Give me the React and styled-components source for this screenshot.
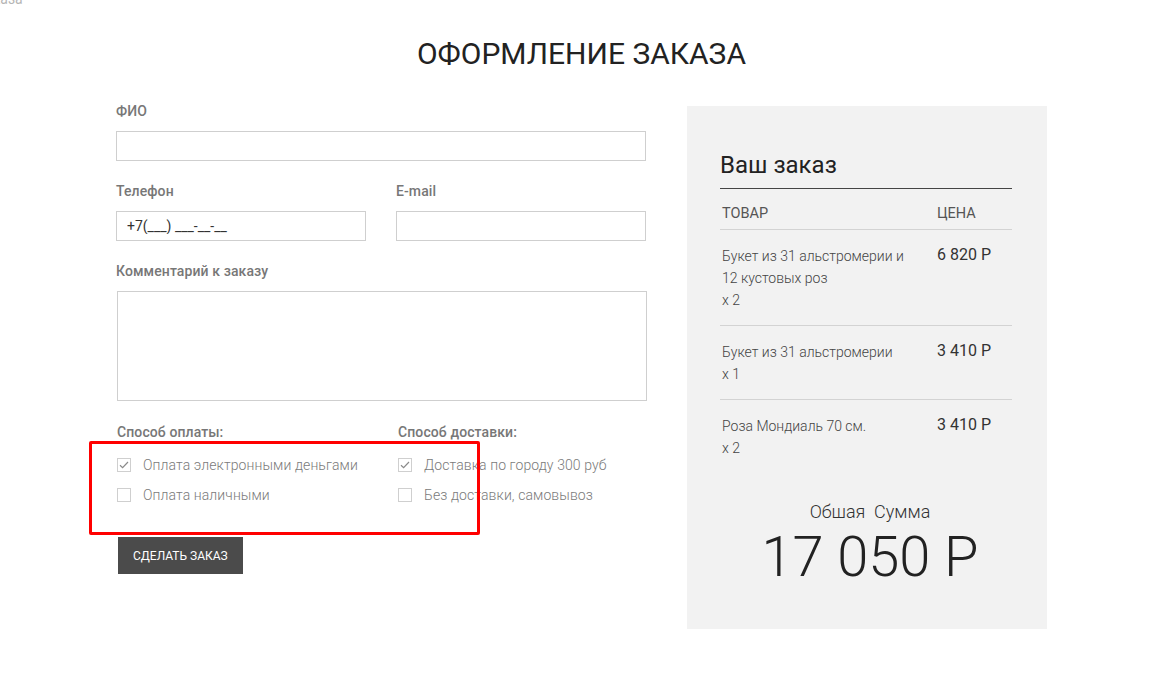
import React from 'react'
import styled, { createGlobalStyle } from 'styled-components'

const GlobalStyle = createGlobalStyle`
  html, body {
    margin: 0;
    padding: 0;
    background: #fff;
  }
  body {
    font-family: Roboto, "Liberation Sans", Arial, sans-serif;
    color: #333;
  }
  * { box-sizing: border-box; }
`

const Page = styled.div`
  position: relative;
  width: 1176px;
  min-height: 687px;
  padding: 0 0 58px 116px;
`

const Crumb = styled.div`
  height: 6px;
  overflow: hidden;
  margin-left: -116px;
  span {
    display: block;
    margin-top: -9px;
    margin-left: -22px;
    font-size: 14px;
    line-height: 16px;
    color: #b5b5b5;
  }
`

const Title = styled.h1`
  width: 931px;
  margin: 28px 0 0;
  text-align: center;
  font-size: 30px;
  line-height: 40px;
  font-weight: 400;
  color: #222;
`

const Layout = styled.div`
  display: grid;
  grid-template-columns: 530px 360px;
  column-gap: 41px;
  margin-top: 32px;
  align-items: start;
`

const Form = styled.form`
  display: flex;
  flex-direction: column;
  margin-top: -3px;
`

const Row = styled.div`
  display: grid;
  grid-template-columns: 250px 250px;
  column-gap: 30px;
`

const Field = styled.div`
  display: flex;
  flex-direction: column;
  margin-bottom: 22px;
`

const Label = styled.label`
  display: block;
  font-size: 14px;
  line-height: 16px;
  font-weight: 500;
  color: #777;
  margin-bottom: 12px;
  letter-spacing: 0.1px;
`

const Input = styled.input`
  width: 100%;
  height: 30px;
  border: 1px solid #cfcfcf;
  padding: 0 10px;
  font-family: Roboto, "Liberation Sans", Arial, sans-serif;
  font-size: 14px;
  color: #333;
  outline: none;
  background: #fff;
`

const TextArea = styled.textarea`
  width: 530px;
  height: 110px;
  margin-left: 1px;
  border: 1px solid #cfcfcf;
  resize: none;
  outline: none;
  font-family: Roboto, "Liberation Sans", Arial, sans-serif;
`

const Methods = styled.div`
  display: grid;
  grid-template-columns: 281px 250px;
  margin-left: 1px;
  margin-top: 1px;
`

const Options = styled.div`
  display: flex;
  flex-direction: column;
  margin-top: -2px;
`

const Option = styled.div`
  display: flex;
  align-items: center;
  height: 30px;
  gap: 12px;
  font-size: 14px;
  font-weight: 300;
  color: #7a7a7a;
  white-space: nowrap;
  letter-spacing: 0.1px;
`

const Box = styled.span`
  width: 14px;
  height: 14px;
  border: 1px solid #cfcfcf;
  display: flex;
  align-items: center;
  justify-content: center;
  background: #fff;
  flex: none;
`

const Button = styled.button`
  align-self: flex-start;
  margin: 27px 0 0 2px;
  height: 37px;
  padding: 0 15px;
  background: #4b4b4b;
  color: #fff;
  border: none;
  font-family: Roboto, "Liberation Sans", Arial, sans-serif;
  font-size: 12px;
  font-weight: 400;
  cursor: pointer;
`

const Panel = styled.aside`
  background: #f2f2f2;
  height: 523px;
  padding: 45px 35px 0 33px;
`

const PanelTitle = styled.h2`
  margin: 0;
  font-size: 24px;
  line-height: 28px;
  font-weight: 400;
  color: #222;
  padding-bottom: 9px;
  border-bottom: 1px solid #444;
`

const Table = styled.div`
  display: grid;
  grid-template-columns: 215px 1fr;
  margin-top: 17px;
`

const Head = styled.div`
  font-size: 14.5px;
  line-height: 16px;
  color: #555;
  padding: 0 0 7px 2px;
  border-bottom: 1px solid #d3d3d3;
`

const Cell = styled.div`
  padding: 15px 0 14px 2px;
  border-bottom: ${p => (p.$last ? 'none' : '1px solid #d3d3d3')};
  font-size: 14px;
  line-height: 22px;
  font-weight: 300;
  color: #444;
`

const Price = styled(Cell)`
  font-size: 16px;
  font-weight: 400;
  color: #333;
  line-height: 20px;
`

const Total = styled.div`
  display: flex;
  flex-direction: column;
  align-items: center;
  margin-top: 27px;
  padding-left: 8px;
`

const TotalLabel = styled.div`
  font-size: 18px;
  line-height: 24px;
  font-weight: 300;
  color: #333;
  white-space: pre;
`

const TotalSum = styled.div`
  font-size: 56px;
  line-height: 66px;
  font-weight: 300;
  color: #222;
  margin-top: 0;
`

const Highlight = styled.div`
  position: absolute;
  left: 89px;
  top: 441px;
  width: 391px;
  height: 94px;
  border: 3px solid #ff0000;
  border-radius: 2px;
  pointer-events: none;
`

const Check = () => (
  <svg width="10" height="8" viewBox="0 0 10 8" fill="none">
    <path d="M1 4.2 L3.6 6.6 L9 1" stroke="#8a8a8a" strokeWidth="1.2" />
  </svg>
)

const items = [
  { name: ['Букет из 31 альстромерии и', '12 кустовых роз'], qty: 2, price: '6 820 Р' },
  { name: ['Букет из 31 альстромерии'], qty: 1, price: '3 410 Р' },
  { name: ['Роза Мондиаль 70 см.'], qty: 2, price: '3 410 Р' },
]

export default function App() {
  return (
    <Page>
      <GlobalStyle />
      <Crumb><span>заказа</span></Crumb>
      <Title>ОФОРМЛЕНИЕ ЗАКАЗА</Title>
      <Layout>
        <Form onSubmit={e => e.preventDefault()}>
          <Field>
            <Label>ФИО</Label>
            <Input />
          </Field>
          <Row>
            <Field>
              <Label>Телефон</Label>
              <Input defaultValue="+7(___) ___-__-__" />
            </Field>
            <Field>
              <Label>E-mail</Label>
              <Input />
            </Field>
          </Row>
          <Field>
            <Label>Комментарий к заказу</Label>
            <TextArea />
          </Field>
          <Methods>
            <div>
              <Label>Способ оплаты:</Label>
              <Options>
                <Option><Box><Check /></Box>Оплата электронными деньгами</Option>
                <Option><Box />Оплата наличными</Option>
              </Options>
            </div>
            <div>
              <Label>Способ доставки:</Label>
              <Options>
                <Option><Box><Check /></Box>Доставка по городу 300 руб</Option>
                <Option><Box />Без доставки, самовывоз</Option>
              </Options>
            </div>
          </Methods>
          <Button type="submit">СДЕЛАТЬ ЗАКАЗ</Button>
        </Form>

        <Panel>
          <PanelTitle>Ваш заказ</PanelTitle>
          <Table>
            <Head>ТОВАР</Head>
            <Head>ЦЕНА</Head>
            {items.map((it, i) => (
              <React.Fragment key={i}>
                <Cell $last={i === items.length - 1}>
                  {it.name.map(l => <div key={l}>{l}</div>)}
                  <div>x {it.qty}</div>
                </Cell>
                <Price $last={i === items.length - 1}>{it.price}</Price>
              </React.Fragment>
            ))}
          </Table>
          <Total>
            <TotalLabel>Обшая  Сумма</TotalLabel>
            <TotalSum>17 050 Р</TotalSum>
          </Total>
        </Panel>
      </Layout>
      <Highlight />
    </Page>
  )
}
